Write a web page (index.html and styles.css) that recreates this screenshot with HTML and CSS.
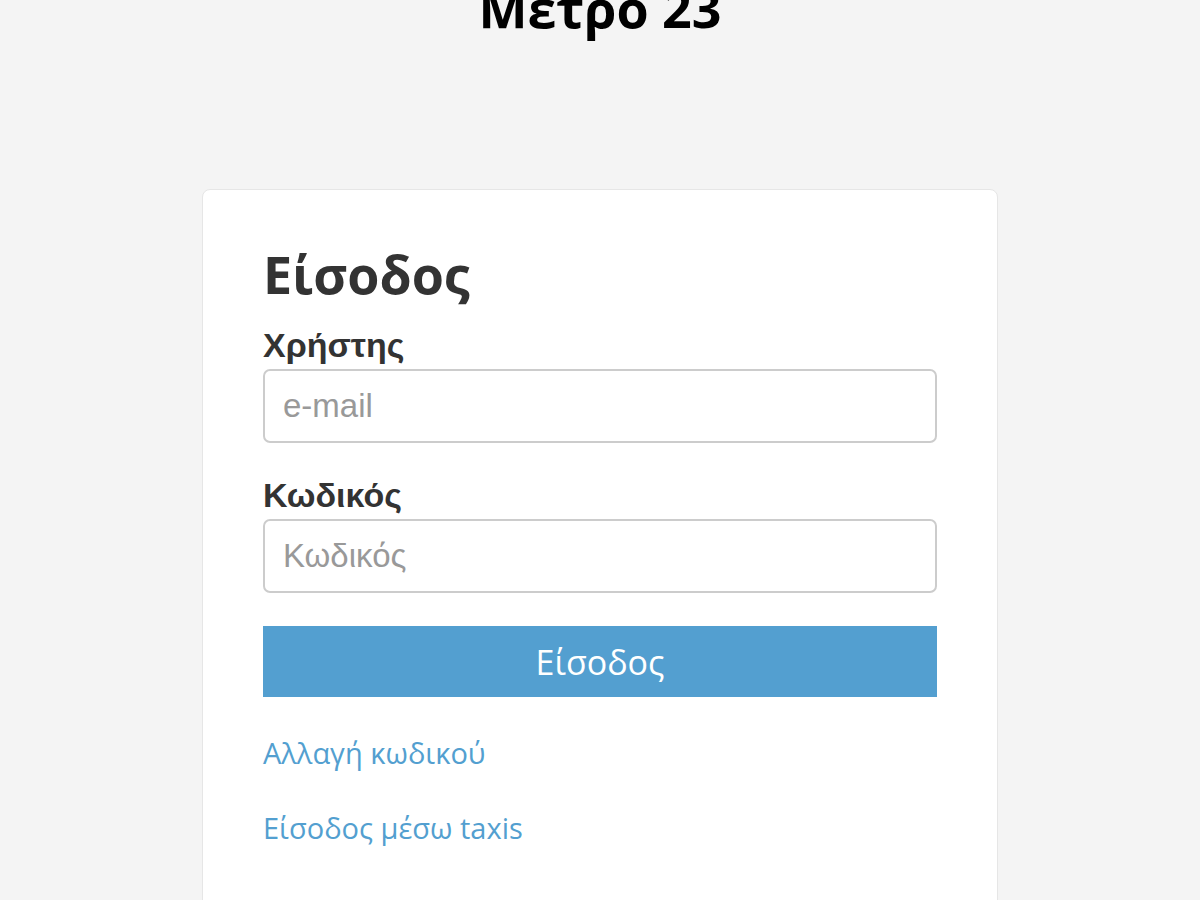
FILE: index.html
```html
<!DOCTYPE html>
<html lang="el">
<head>
  <meta charset="UTF-8">
  <meta name="viewport" content="width=device-width, initial-scale=1.0">
  <title>Μετρο 23 - Είσοδος</title>
  <link rel="stylesheet" href="styles.css">
</head>
<body>
  <h1 class="site-title">Μετρο 23</h1>

  <div class="login-box">
    <h2>Είσοδος</h2>
    <form class="login-form" onsubmit="return false;">
      <div class="form-group">
        <label for="user">Χρήστης</label>
        <input type="email" id="user" placeholder="e-mail">
      </div>
      <div class="form-group">
        <label for="pass">Κωδικός</label>
        <input type="password" id="pass" placeholder="Κωδικός">
      </div>
      <button type="submit">Είσοδος</button>
    </form>
    <div class="links">
      <a href="#">Αλλαγή κωδικού</a>
      <a href="#">Είσοδος μέσω taxis</a>
    </div>
  </div>
</body>
</html>
```

FILE: styles.css
```css
body {
  margin: 0;
  background: #f4f4f4;
  font-family: "Open Sans", sans-serif;
  color: #333;
}
.site-title {
  font-size: 52px;
  font-weight: bold;
  text-align: center;
  color: #000;
  margin: -28px 0 146px;
  line-height: 71px;
}
.login-box {
  background: #fff;
  width: 674px;
  margin: 0 auto;
  padding: 50px 60px 40px;
  border: 1px solid #e6e6e6;
  border-radius: 8px;
  min-height: 700px;
}
.login-box h2 {
  font-size: 52px;
  font-weight: bold;
  margin: 0 0 17px;
  line-height: 68px;
}
.form-group {
  margin-bottom: 32px;
}
.form-group label {
  display: block;
  font-family: "Liberation Sans", Arial, sans-serif;
  font-weight: bold;
  font-size: 34px;
  line-height: 40px;
  margin-bottom: 4px;
}
.form-group input {
  display: block;
  width: 100%;
  box-sizing: border-box;
  height: 74px;
  padding: 0 18px;
  font-family: "Liberation Sans", Arial, sans-serif;
  font-size: 33px;
  border: 2px solid #ccc;
  border-radius: 7px;
  background: #fff;
}
.form-group input::placeholder {
  color: #999;
}
button {
  display: block;
  width: 100%;
  height: 71px;
  background: #539fd0;
  color: #fff;
  border: none;
  font-family: "Open Sans", sans-serif;
  font-size: 34px;
  margin-top: 33px;
}
.links {
  margin-top: 36px;
}
.links a {
  display: block;
  color: #539fd0;
  text-decoration: none;
  font-size: 29px;
  line-height: 40px;
  margin-bottom: 35px;
}
```
